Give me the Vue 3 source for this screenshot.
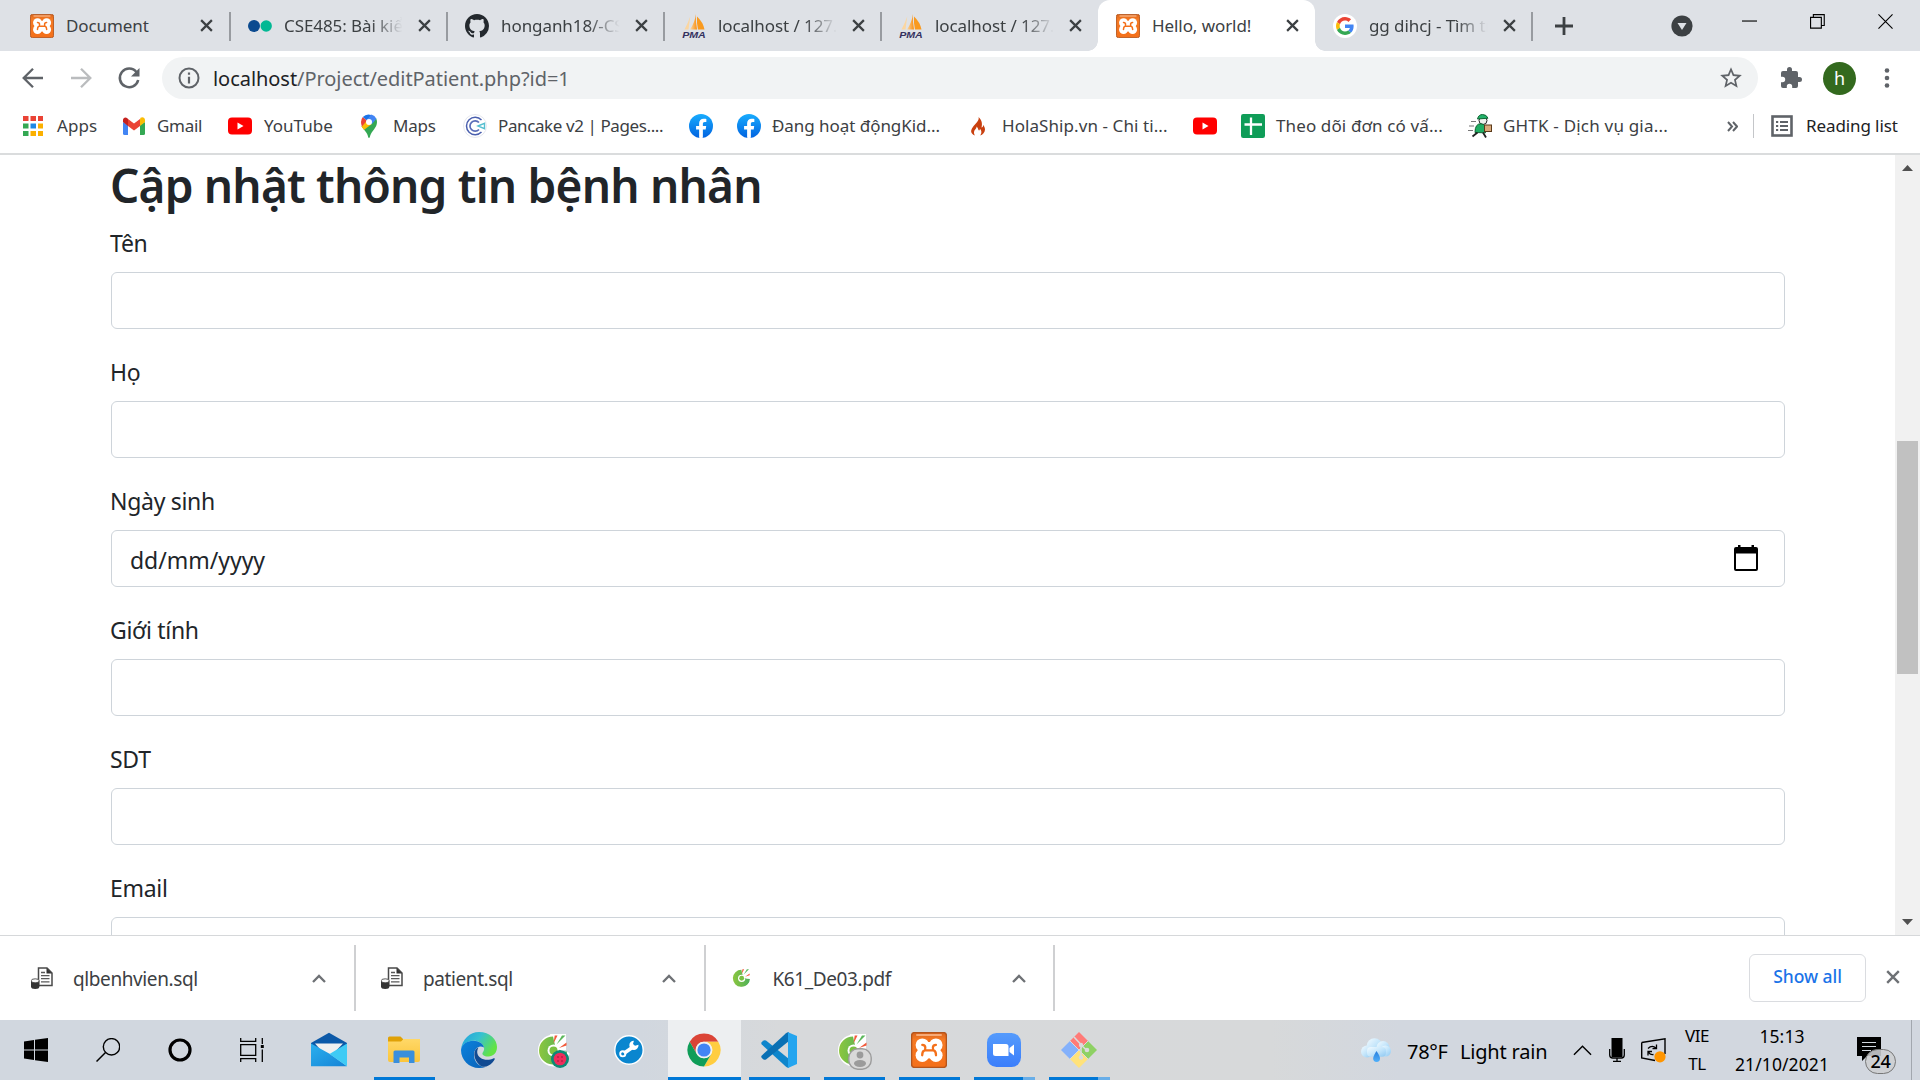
<script setup>
const tabs = [
  { icon: 'xampp', title: 'Document' },
  { icon: 'dots', title: 'CSE485: Bài kiểm tra', fade: true },
  { icon: 'github', title: 'honganh18/-CSE485', fade: true },
  { icon: 'pma', title: 'localhost / 127.0.0.1', fade: true },
  { icon: 'pma', title: 'localhost / 127.0.0.1', fade: true },
  { icon: 'xampp', title: 'Hello, world!', active: true },
  { icon: 'google', title: 'gg dihcj - Tìm trên Google', fade: true },
]

const bookmarks = [
  { icon: 'apps', title: 'Apps', w: 101, gap: 12, ls: 0.1 },
  { icon: 'gmail', title: 'Gmail', w: 106, gap: 11, ls: -0.3 },
  { icon: 'youtube', title: 'YouTube', w: 129, gap: 12, ls: 0 },
  { icon: 'maps', title: 'Maps', w: 106, gap: 12, ls: -0.2 },
  { icon: 'pancake', title: 'Pancake v2 | Pages....', w: 226, gap: 11, ls: -0.4 },
  { icon: 'facebook', title: '', w: 48, gap: 0 },
  { icon: 'facebook', title: 'Đang hoạt độngKid...', w: 229, gap: 11, ls: -0.05 },
  { icon: 'fire', title: 'HolaShip.vn - Chi ti...', w: 227, gap: 12, ls: 0.08 },
  { icon: 'youtube', title: '', w: 48, gap: 0 },
  { icon: 'sheets', title: 'Theo dõi đơn có vấ...', w: 227, gap: 11, ls: 0.12 },
  { icon: 'ghtk', title: 'GHTK - Dịch vụ gia...', w: 210, gap: 11, ls: 0.2 },
]

const fields = [
  { label: 'Tên' },
  { label: 'Họ' },
  { label: 'Ngày sinh', value: 'dd/mm/yyyy', date: true },
  { label: 'Giới tính' },
  { label: 'SDT' },
  { label: 'Email' },
]

const downloads = [
  { icon: 'sqlfile', name: 'qlbenhvien.sql' },
  { icon: 'sqlfile', name: 'patient.sql' },
  { icon: 'coccoc', name: 'K61_De03.pdf' },
]

const system = ['windows', 'search', 'cortana', 'taskview']
const apps = [
  { icon: 'mail' },
  { icon: 'explorer', open: true },
  { icon: 'edge' },
  { icon: 'coccoc', badge: 'melon' },
  { icon: 'wrench' },
  { icon: 'chrome', open: true, active: true },
  { icon: 'vscode', open: true },
  { icon: 'coccoc', badge: 'person', open: true },
  { icon: 'xampp', open: true },
  { icon: 'zoom', open: true, multi: true },
  { icon: 'git', open: true, multi: true },
]
</script>

<template>
  <div class="screen">
    <svg class="defs" width="0" height="0" aria-hidden="true">
      <defs>
        <linearGradient id="gOrange" x1="0" y1="0" x2="0" y2="1"><stop offset="0" stop-color="#d9641c" /><stop offset=".2" stop-color="#f57a24" /><stop offset="1" stop-color="#f4701a" /></linearGradient>
        <linearGradient id="gFb" x1="0" y1="0" x2="0" y2="1"><stop offset="0" stop-color="#18acfe" /><stop offset="1" stop-color="#0163e0" /></linearGradient>
        <linearGradient id="gSail" x1="0" y1="0" x2="1" y2="0"><stop offset="0" stop-color="#fbd9a6" /><stop offset="1" stop-color="#f98d0e" /></linearGradient>
        <linearGradient id="gCoc" x1="0" y1="0" x2="1" y2="0"><stop offset="0" stop-color="#8cc63f" /><stop offset="1" stop-color="#4db05a" /></linearGradient>
        <linearGradient id="gFolder" x1="0" y1="0" x2="0" y2="1"><stop offset="0" stop-color="#ffd868" /><stop offset="1" stop-color="#fbc53a" /></linearGradient>
        <linearGradient id="gEdgeTop" x1="0" y1="0" x2="1" y2=".5"><stop offset="0" stop-color="#1f9fdf" /><stop offset=".5" stop-color="#36c1d0" /><stop offset="1" stop-color="#62e345" /></linearGradient>
        <linearGradient id="gEdge" x1="0" y1="0" x2="1" y2="1"><stop offset="0" stop-color="#0b82dd" /><stop offset="1" stop-color="#0a62b8" /></linearGradient>
        <linearGradient id="gMail" x1="0" y1="0" x2="1" y2="1"><stop offset="0" stop-color="#2bb0ee" /><stop offset="1" stop-color="#1583d6" /></linearGradient>
        <linearGradient id="gZoom" x1="0" y1="0" x2="0" y2="1"><stop offset="0" stop-color="#559bfc" /><stop offset="1" stop-color="#3a7efb" /></linearGradient>
        <linearGradient id="gCloud" x1="0" y1="0" x2="1" y2="1"><stop offset="0" stop-color="#f3fbff" /><stop offset=".5" stop-color="#c5e6fb" /><stop offset="1" stop-color="#8ec8f2" /></linearGradient>
        <linearGradient id="gDrop" x1="0" y1="0" x2="0" y2="1"><stop offset="0" stop-color="#2a7fdc" /><stop offset="1" stop-color="#4fb0fb" /></linearGradient>
      </defs>
      <symbol id="xampp" viewBox="0 0 36 36">
        <rect x=".6" y=".6" width="34.8" height="34.8" rx="3" fill="url(#gOrange)" stroke="#b4551c" stroke-width="1.4" />
        <rect x="5" y="2" width="26" height="2" rx="1" fill="#ffc69c" opacity=".7" />
        <g fill="#fff"><circle cx="11.300" cy="13.100" r="6.700" /><circle cx="24.900" cy="13.100" r="6.700" /><circle cx="11.300" cy="23.300" r="6.700" /><circle cx="24.900" cy="23.300" r="6.700" /><rect x="7.500" y="10" width="21" height="16.500" /></g>
        <path d="M18.100 6v3.600M18.100 26.800v3.600" stroke="#f4701a" stroke-width="1.600" />
        <path d="M4 18.200h2M30.200 18.200h2" stroke="#f4701a" stroke-width="2" />
        <g fill="none" stroke="#f4701a" stroke-width="2.300" stroke-linecap="round" stroke-linejoin="round"><path d="M11.300 12.800q3 .2 3 2.700t-.8 2.900q-2.300.8-2.300 4.900M24.900 12.800q-3 .2-3 2.700t.8 2.900q2.300.8 2.300 4.900M13.500 18.400h9" /></g>
      </symbol>
      <symbol id="dots" viewBox="0 0 24 24"><circle cx="6" cy="12" r="6" fill="#0b4a8f" /><circle cx="18.200" cy="12" r="5.700" fill="#02b894" /></symbol>
      <symbol id="github" viewBox="0 0 16 16"><path fill="#24292e" d="M8 0C3.580 0 0 3.580 0 8c0 3.540 2.290 6.530 5.470 7.590.4.070.55-.17.55-.38 0-.19-.01-.82-.01-1.490-2.010.37-2.530-.49-2.690-.94-.09-.23-.48-.94-.82-1.130-.28-.15-.68-.52-.01-.53.63-.01 1.080.58 1.230.82.72 1.210 1.870.87 2.330.66.07-.52.28-.87.51-1.070-1.780-.2-3.640-.89-3.640-3.950 0-.87.31-1.590.82-2.150-.08-.2-.36-1.020.08-2.120 0 0 .67-.21 2.200.82.64-.18 1.320-.27 2-.27s1.360.09 2 .27c1.530-1.040 2.200-.82 2.200-.82.44 1.100.16 1.920.08 2.120.51.56.82 1.270.82 2.150 0 3.070-1.870 3.750-3.650 3.950.29.25.54.73.54 1.480 0 1.070-.01 1.930-.01 2.200 0 .21.15.46.55.38A8.010 8.010 0 0 0 16 8c0-4.420-3.580-8-8-8z" /></symbol>
      <symbol id="pma" viewBox="0 0 24 24">
        <path d="M8.200 2.500 6.500 15.500H2.500Q6 9 8.200 2.500z" fill="#fbd6a0" /><path d="M14 0Q13.500 9 15 15.500H8Q13 8 14 0z" fill="url(#gSail)" /><path d="M15 2.500Q21 8 22.500 15.500H16Q14.500 9 15 2.500z" fill="#f99a1f" />
        <text x=".3" y="23.500" font-family="Liberation Sans, sans-serif" font-size="9" font-weight="bold" font-style="italic" fill="#35315f" textLength="23.400" lengthAdjust="spacingAndGlyphs">PMA</text>
      </symbol>
      <symbol id="google" viewBox="0 0 24 24"><circle cx="12" cy="12" r="12" fill="#fff" /><g transform="translate(3 3) scale(.375)"><path fill="#ea4335" d="M24 9.500c3.540 0 6.710 1.220 9.210 3.600l6.850-6.850C35.900 2.380 30.470 0 24 0 14.620 0 6.510 5.380 2.560 13.220l7.980 6.190C12.430 13.720 17.740 9.500 24 9.500z" /><path fill="#4285f4" d="M46.980 24.550c0-1.570-.15-3.090-.38-4.550H24v9.020h12.940c-.58 2.960-2.260 5.480-4.780 7.180l7.730 6c4.510-4.180 7.090-10.360 7.090-17.650z" /><path fill="#fbbc05" d="M10.530 28.590c-.48-1.450-.76-2.990-.76-4.590s.27-3.140.76-4.590l-7.980-6.190C.92 16.460 0 20.120 0 24c0 3.880.92 7.540 2.560 10.780l7.970-6.190z" /><path fill="#34a853" d="M24 48c6.480 0 11.930-2.130 15.890-5.810l-7.730-6c-2.150 1.450-4.920 2.300-8.160 2.300-6.260 0-11.570-4.220-13.470-9.910l-7.980 6.190C6.510 42.620 14.620 48 24 48z" /></g></symbol>
      <symbol id="apps" viewBox="0 0 24 24"><g><path fill="#ea4335" d="M2 2h5.500v5H2zM9.500 2H15v5H9.500zM17 2h5v5h-5z" /><path fill="#34a853" d="M2 9.500h5.500v5H2zM2 17h5.500v5H2z" /><path fill="#1e88e5" d="M9.500 9.500H15v5H9.500z" /><path fill="#fbb000" d="M17 9.500h5v5h-5zM9.500 17H15v5H9.500zM17 17h5v5h-5z" /></g></symbol>
      <symbol id="gmail" viewBox="0 0 24 24"><path fill="#4285f4" d="M1 8v11.500A1.500 1.500 0 0 0 2.500 21H6V11z" /><path fill="#34a853" d="M18 11v10h3.500a1.500 1.500 0 0 0 1.500-1.500V8z" /><path fill="#fbbc04" d="M18 5.500V12l5-4V6c0-2.500-2.700-3.600-4.500-2.200z" /><path fill="#ea4335" d="M6 12V5l6 4.600L18 5v7l-6 4.600z" /><path fill="#c5221f" d="M1 6v2l5 4V5l-.7-.8C3.500 2.600 1 3.800 1 6z" /></symbol>
      <symbol id="youtube" viewBox="0 0 24 24"><rect x="0" y="3.500" width="24" height="17" rx="4" fill="red" /><path d="M9.500 8.500v7l6-3.500z" fill="#fff" /></symbol>
      <symbol id="maps" viewBox="0 0 24 24"><path fill="#34a853" d="M4.500 12c1 3 5 5 6.300 9.800.4 1.600.6 2.200 1.200 2.200s.8-.6 1.200-2.200C14.800 16.500 20 14 20 8q0-1.800-.8-3.500z" /><path fill="#fbbc04" d="M7 15.500 17.500 3 12 8.500 4.500 12q.8 1.700 2.500 3.500z" /><path fill="#fbbc04" d="m9.500 5.500-4.800 6.800q.8 1.700 2.500 3.400L14.800 10z" /><path fill="#ea4335" d="M5.800 3A8 8 0 0 0 4 8q0 2.500 1 4.500L10 6.500z" /><path fill="#1a73e8" d="M5.800 3 10 6.500 14.400 1A8 8 0 0 0 5.800 3z" /><path fill="#4285f4" d="M14.400.4 9.500 6.200l5.200 4 4.700-5.500A8 8 0 0 0 14.400.4z" /><circle cx="12" cy="8" r="3" fill="#fff" /></symbol>
      <symbol id="pancake" viewBox="0 0 24 24"><circle cx="12" cy="12" r="11.500" fill="#fff" stroke="#e6e8ef" /><g fill="none"><path d="M18.500 6A8.700 8.700 0 1 0 18.500 18" stroke="#4a5fae" stroke-width="1.500" /><path d="M16 8.500a5.200 5.200 0 1 0 0 7" stroke="#5a6db8" stroke-width="1.700" /><path d="m15 12 6.500-2.600v5.200z" stroke="#56bfd0" stroke-width="1.400" /></g></symbol>
      <symbol id="facebook" viewBox="0 0 24 24"><circle cx="12" cy="12" r="12" fill="url(#gFb)" /><path fill="#fff" d="m16.670 15.470.53-3.470h-3.330V9.750c0-.95.460-1.870 1.960-1.870h1.510V4.920s-1.370-.23-2.690-.23c-2.740 0-4.530 1.660-4.530 4.670V12H7.080v3.470h3.040v8.390a12 12 0 0 0 3.750 0v-8.390z" /></symbol>
      <symbol id="fire" viewBox="0 0 24 24"><path fill="#c9400f" d="M12.500 3c1 3-1.500 5-4 8S4 17 6 19.500q1 1.500 3 2c-1.500-2-1.300-4.500.2-6 1-1 1.500-1.800 1.300-3 2 1.500 1.600 3.500 2.500 4 .9-.2 1-1.300.8-2 2.200 2 2 5 .4 7 2.500-.8 4.800-3 4.800-6 0-2-1-3.500-1.800-4.500 0 1.300-.5 2.300-1.700 2.500C16.500 10 16 6 12.500 3z" /></symbol>
      <symbol id="sheets" viewBox="0 0 24 24"><rect width="24" height="24" rx="2.200" fill="#0f9d58" /><path d="M10 3.500v17.500M3.500 10.500h17.500" stroke="#fff" stroke-width="2.300" /></symbol>
      <symbol id="ghtk" viewBox="0 0 24 24"><path d="M3 7.500h5M1 12h5M0 16.500h5" stroke="#777" stroke-width="1.100" /><circle cx="15" cy="6.500" r="4" fill="#eef3ee" stroke="#222" /><path d="M9.500 5Q10.500.5 14.500.5t5.500 3.700z" fill="#23b26b" stroke="#163" /><path d="M7 18.500Q7 9.500 13 9.800q3.500.2 4.500 3v6z" fill="#1fae63" stroke="#163" /><rect x="16.500" y="11" width="7" height="6.500" fill="#d9a97a" stroke="#5b3a1a" /><path d="m9.500 18.500-5 4M15 18.500l3 5" stroke="#222" stroke-width="1.800" /></symbol>
      <symbol id="reading" viewBox="0 0 22 22"><rect x="1.500" y="1.500" width="19" height="19" fill="none" stroke="#5f6368" stroke-width="2.600" /><path d="M5 7h2.200M9 7h8M5 11h2.200M9 11h8M5 15h2.200M9 15h8" stroke="#5f6368" stroke-width="2.100" /></symbol>
      <symbol id="close" viewBox="0 0 14 14"><path d="m1.200 1.200 11.600 11.600m0-11.600L1.200 12.800" stroke="currentColor" stroke-width="2.400" /></symbol>
      <symbol id="chevron" viewBox="0 0 14 9"><path d="M1 8l6-6 6 6" fill="none" stroke="currentColor" stroke-width="2.300" /></symbol>
      <symbol id="sqlfile" viewBox="0 0 22 22"><path d="M7.500 1h8.500l5 5v12.500H7.500z" fill="#fff" stroke="#4a4a4a" stroke-width="1.500" /><path d="M15.500 1v5.500h5.500z" fill="#333" /><path d="M10 5.500h4M10 8.600h8.500M10 11.700h8.500M10 14.800h8.500" stroke="#5a5a5a" stroke-width="1.300" /><path d="M0 14v5.500q0 2.500 4.200 2.500t4.200-2.500V14z" fill="#333" /><ellipse cx="4.200" cy="13.800" rx="4" ry="2" fill="#f7f7f7" stroke="#333" stroke-width=".8" /></symbol>
      <symbol id="coccoc" viewBox="0 0 36 36"><path d="M17 4A14.500 14.500 0 1 0 32 22l-8-3-5-3z" fill="url(#gCoc)" stroke="#fff" stroke-width="3" stroke-linejoin="round" /><path d="M14 2h16v16H18z" fill="#fff" /><path d="M17 4.500A14 14 0 1 0 31 19.500l-5.500-.3-6-4z" fill="url(#gCoc)" /><circle cx="17.500" cy="18.500" r="6" fill="#fff" /><circle cx="17.500" cy="18.500" r="4" fill="#7cc142" /><path d="m17.500 11.500 1.200-8h2.800z" fill="#f2593a" /><path d="m20.500 12.500 5.500-9h3.500z" fill="#5cb85c" /><path d="m23 16 7.500-5.500v3z" fill="#f2593a" /></symbol>
      <symbol id="windows" viewBox="0 0 24 24"><path d="M0 3.400 10 2v9.500H0zM11 1.800 24 0v11.500H11zM0 12.500h10V22L0 20.600zM11 12.500h13V24l-13-1.800z" /></symbol>
      <symbol id="search" viewBox="0 0 24 24"><circle cx="15.500" cy="8.800" r="8.200" fill="none" stroke="#000" stroke-width="1.400" /><path d="M9.500 14.500.5 23.500" stroke="#000" stroke-width="1.500" /></symbol>
      <symbol id="cortana" viewBox="0 0 24 24"><circle cx="12" cy="12" r="10" fill="none" stroke="#000" stroke-width="3.200" /></symbol>
      <symbol id="taskview" viewBox="0 0 24 24"><path d="M.7 0v3.300h15V0M.7 24v-3.300h15V24M.7 6.700h15v10.600H.7zM22.300 0v6M22.300 11.500V24" fill="none" stroke="#000" stroke-width="1.300" /><path d="M20.800 7h3v3h-3z" /></symbol>
      <symbol id="mail" viewBox="0 0 36 36"><path d="M0 11 18 .8 36 11v8H0z" fill="#0c59a8" /><path d="M4 11.500h28L20 24H15z" fill="#f0f0f0" /><path d="M0 11.500 19 22 36 34.200H0z" fill="url(#gMail)" /><path d="M36 11.500 18.500 22 36 34.200z" fill="#3fcbf5" /></symbol>
      <symbol id="explorer" viewBox="0 0 36 36"><path d="M2 6q0-1.500 1.500-1.500h11L17 7v4H2z" fill="#e0a106" /><path d="M2 9.500h13L17.500 7H34v21q0 2-2 2H4q-2 0-2-2z" fill="url(#gFolder)" /><path d="M7.500 31V20q0-1.500 1.500-1.500h18q1.500 0 1.500 1.500v11h-5.500v-5.500h-9.500V31z" fill="#3a8fdc" /></symbol>
      <symbol id="edge" viewBox="0 0 36 36"><path d="M0 18C1 7 9 0 18 0c11 0 18 7.500 18 15 0 6-4 9.500-8.500 9.500-5 0-6.500-2-6-3.500 1-2 2-3 1.500-5.500C22 11 17 8.500 12 8.700 5 9 .5 13.500 0 18z" fill="url(#gEdgeTop)" /><path d="M0 18C.5 12.500 6 8.700 12 8.700c6 0 10.500 3 11 6.800-5-3-10 1-10 7.500 0 6 4.500 12 11.500 12Q22 36 18 36C8 36 0 28 0 18z" fill="url(#gEdge)" /><path d="M17.500 15.500c-6 2-5.500 12 1.500 18 3 2 6 1.500 8.500.1 3-1.700 5.500-4.600 6.200-6.400.3-.8-.4-1.200-1-.9-7 3.500-16 .7-16.500-6 0-2 .5-3.500 1.300-4.800z" fill="#114a92" /></symbol>
      <symbol id="wrench" viewBox="0 0 36 36"><circle cx="18" cy="18" r="14.200" fill="#0a86cf" stroke="#fff" stroke-width="1.400" /><path d="M13 21.200 22 15" stroke="#fff" stroke-width="3.600" /><circle cx="11.800" cy="21.800" r="2.600" fill="none" stroke="#fff" stroke-width="1.900" /><path d="M27.500 12.800a4.600 4.600 0 1 1-4.600-4.100l-.9 3.300 2 1.700z" fill="#fff" /></symbol>
      <symbol id="chrome" viewBox="0 0 48 48"><path d="M4.950 12.980A22 22 0 0 1 43.100 13H24a11 11 0 0 0-9.530 16.500z" fill="#db4437" /><path d="M43.100 13A22 22 0 0 1 24 46l9.530-16.500A11 11 0 0 0 24 13z" fill="#ffcd40" /><path d="M4.950 12.980A22 22 0 0 0 24 46l9.530-16.500a11 11 0 0 1-19.060 0z" fill="#0f9d58" /><circle cx="24" cy="24" r="11" fill="#f1f1f1" /><circle cx="24" cy="24" r="8.800" fill="#4285f4" /></symbol>
      <symbol id="vscode" viewBox="0 0 36 36"><path d="M2.500 8.600q1.300-.9 2.500 0L28 27v8.500q-1.500.5-3-.8L.8 12.500q-1.100-1.200 0-2.400z" fill="#0f86cc" /><path d="M2.500 27.400q1.300.9 2.500 0L28 9V.5q-1.500-.5-3 .8L.8 23.500q-1.100 1.200 0 2.400z" fill="#0a70b4" /><path d="M27 .2 36 4v28l-9 4z" fill="#24a5ef" /></symbol>
      <symbol id="zoom" viewBox="0 0 36 36"><rect x="1" y="1" width="34" height="34" rx="9.500" fill="url(#gZoom)" /><path d="M7 12h13q2.500 0 2.500 2.500V24h-13Q7 24 7 21.500zM23.500 16l4.500-3.600v11.200L23.500 20z" fill="#fff" /></symbol>
      <symbol id="git" viewBox="0 0 36 36"><path d="M9 9 18 0l9 9-9 9z" fill="#ff7b78" /><path d="m18 18 9-9 9 9-9 9z" fill="#8ed164" /><path d="m0 18 9-9 9 9-9 9z" fill="#84b1fb" /><path d="m9 27 9-9 9 9-9 9z" fill="#ffe27a" /><path d="M13 5 20 12.500v13M20 13l5.500 5" stroke="#dadbdc" stroke-width="1.600" fill="none" /><path d="m9 9 9 9 9-9M9 27l9-9 9 9" stroke="#dadbdc" stroke-width="1" fill="none" /><circle cx="26" cy="18" r="2.300" fill="#dadbdc" /><circle cx="20" cy="25.500" r="2.300" fill="#dadbdc" /><circle cx="20" cy="13" r="2.200" fill="#dadbdc" /></symbol>
      <symbol id="melon" viewBox="0 0 18 18"><circle cx="9" cy="9" r="9" fill="#0d8a75" /><circle cx="9" cy="9" r="6.300" fill="#ee2d5b" /><g fill="#9c1238"><circle cx="7" cy="7" r=".8" /><circle cx="11" cy="7" r=".8" /><circle cx="7" cy="11" r=".8" /><circle cx="11" cy="11" r=".8" /></g></symbol>
      <symbol id="person" viewBox="0 0 24 22"><rect x=".8" y=".8" width="22.400" height="20.400" rx="9" fill="#d9d9d9" stroke="#9c9c9c" stroke-width="1.400" /><circle cx="12" cy="7" r="3.400" fill="#9b9b9b" /><ellipse cx="12" cy="15.500" rx="6" ry="3.400" fill="#9b9b9b" /></symbol>
    </svg>

    <header class="tabstrip">
      <div v-for="(t, i) in tabs" :key="i" class="tab" :class="{ active: t.active, plain: i === 4 }">
        <svg class="fav"><use :href="'#' + t.icon" /></svg>
        <span class="tab-title" :class="{ fade: t.fade }">{{ t.title }}</span>
        <svg class="tab-x"><use href="#close" /></svg>
      </div>
      <svg class="plus" viewBox="0 0 18 18"><path d="M9 0v18M0 9h18" stroke="#3c4043" stroke-width="2.800" /></svg>
      <div class="window-controls">
        <svg width="22" height="22" viewBox="0 0 22 22"><circle cx="11" cy="11" r="10.600" fill="#3c4043" /><path d="M6.500 8h9L11 15z" fill="#dee1e6" /></svg>
        <svg class="ctl" viewBox="0 0 16 16"><path d="M0 7.500h16" stroke="#000" stroke-width="1.200" /></svg>
        <svg class="ctl" viewBox="0 0 16 16"><path d="M.6 3.600h11.500v11.500H.6zM3.600 3.500V.6h11.600v11.600h-3" fill="none" stroke="#000" stroke-width="1.200" /></svg>
        <svg class="ctl" viewBox="0 0 16 16"><path d="m.5.5 15 15m0-15-15 15" stroke="#000" stroke-width="1.200" /></svg>
      </div>
    </header>

    <div class="toolbar">
      <svg class="nav" viewBox="0 0 24 24"><path d="M22 12H3.500M12 2.700 2.700 12l9.300 9.300" fill="none" stroke="#5f6368" stroke-width="2.300" /></svg>
      <svg class="nav" viewBox="0 0 24 24"><path d="M2 12h18.500M12 2.700l9.300 9.300-9.300 9.300" fill="none" stroke="#babcbe" stroke-width="2.300" /></svg>
      <svg class="nav" viewBox="0 0 24 24"><path d="M19.500 6.200A9.300 9.300 0 1 0 21.200 14" fill="none" stroke="#5f6368" stroke-width="2.500" /><path d="M22.500 2v8.500H14z" fill="#5f6368" /></svg>
      <div class="omnibox">
        <svg class="info" viewBox="0 0 22 22"><circle cx="11" cy="11" r="9.500" fill="none" stroke="#5f6368" stroke-width="2" /><path d="M11 5.500v2.300M11 9.700v6.800" stroke="#5f6368" stroke-width="2.200" /></svg>
        <span class="url"><b>localhost</b>/Project/editPatient.php?id=1</span>
        <svg class="star" viewBox="0 0 24 24"><path fill="#5f6368" d="M22 9.240l-7.190-.62L12 2 9.190 8.630 2 9.240l5.460 4.730L5.820 21 12 17.270 18.180 21l-1.630-7.030L22 9.240zM12 15.400l-3.760 2.270 1-4.280-3.320-2.880 4.380-.38L12 6.100l1.710 4.040 4.380.38-3.320 2.880 1 4.280L12 15.400z" /></svg>
      </div>
      <svg class="puzzle" viewBox="0 0 24 24"><path fill="#5f6368" d="M20.500 11H19V7a2 2 0 0 0-2-2h-4V3.500a2.500 2.500 0 0 0-5 0V5H4a2 2 0 0 0-2 2v3.800h1.500a2.700 2.700 0 0 1 0 5.400H2V20a2 2 0 0 0 2 2h3.800v-1.500a2.700 2.700 0 0 1 5.400 0V22H17a2 2 0 0 0 2-2v-4h1.500a2.500 2.500 0 0 0 0-5z" /></svg>
      <span class="avatar">h</span>
      <svg class="kebab" viewBox="0 0 6 20"><g fill="#5f6368"><circle cx="3" cy="2.500" r="2.300" /><circle cx="3" cy="10" r="2.300" /><circle cx="3" cy="17.500" r="2.300" /></g></svg>
    </div>

    <nav class="bookmarks">
      <a v-for="(b, i) in bookmarks" :key="i" class="bm" :style="{ width: b.w + 'px', gap: b.gap + 'px', letterSpacing: (b.ls || 0) + 'px' }">
        <svg class="fav"><use :href="'#' + b.icon" /></svg><span v-if="b.title">{{ b.title }}</span>
      </a>
      <svg class="more" viewBox="0 0 11 11"><path d="M1 1l4 4.500L1 10M6 1l4 4.500L6 10" fill="none" stroke="#5f6368" stroke-width="2" /></svg>
      <div class="reading"><svg><use href="#reading" /></svg><span>Reading list</span></div>
    </nav>

    <main class="page">
      <div class="content">
        <h1>Cập nhật thông tin bệnh nhân</h1>
        <div v-for="f in fields" :key="f.label" class="field">
          <label>{{ f.label }}</label>
          <div class="control">
            <span>{{ f.value }}</span>
            <svg v-if="f.date" viewBox="0 0 24 26"><path d="M2 3h20q1 0 1 1v20q0 1-1 1H2q-1 0-1-1V4q0-1 1-1z" fill="none" stroke="#000" stroke-width="2" /><path d="M1 3h22v5.500H1zM4 0h2.500v4H4zM17.500 0H20v4h-2.500z" /></svg>
          </div>
        </div>
      </div>
      <div class="scrollbar">
        <svg class="arrow" viewBox="0 0 11 6"><path d="M0 6 5.500 0 11 6z" fill="#505050" /></svg>
        <div class="thumb"></div>
        <svg class="arrow" viewBox="0 0 11 6"><path d="M0 0h11L5.500 6z" fill="#505050" /></svg>
      </div>
    </main>

    <section class="shelf">
      <div v-for="d in downloads" :key="d.name" class="dl">
        <svg class="dl-icon"><use :href="'#' + d.icon" /></svg>
        <span>{{ d.name }}</span>
        <svg class="dl-chev"><use href="#chevron" /></svg>
      </div>
      <button class="show-all">Show all</button>
      <svg class="shelf-x"><use href="#close" /></svg>
    </section>

    <footer class="taskbar">
      <div v-for="s in system" :key="s" class="sys"><svg><use :href="'#' + s" /></svg></div>
      <div class="apps">
        <div v-for="(a, i) in apps" :key="i" class="app" :class="{ active: a.active, open: a.open, multi: a.multi }">
          <svg class="app-icon" :class="a.icon"><use :href="'#' + a.icon" /></svg>
          <svg v-if="a.badge" class="badge" :class="a.badge"><use :href="'#' + a.badge" /></svg>
        </div>
      </div>
      <div class="tray">
        <svg class="weather" viewBox="0 0 30 24"><g fill="url(#gCloud)"><circle cx="6" cy="13.500" r="6" /><circle cx="13.500" cy="8" r="7.800" /><circle cx="22" cy="9.500" r="6.500" /><circle cx="24.500" cy="13" r="5.500" /><rect x="6" y="9" width="19" height="9.800" rx="4" /></g><path d="M15.500 13q3.500 5 3.500 7.500a3.400 3.400 0 0 1-6.800 0Q12.200 18 15.500 13z" fill="url(#gDrop)" /></svg>
        <span class="temp">78°F</span><span class="cond">Light rain</span>
        <svg class="up" viewBox="0 0 20 12"><path d="M1 11 10 2l9 9" fill="none" stroke="#000" stroke-width="1.500" /></svg>
        <svg class="mic" viewBox="0 0 16 24"><path d="M2.500 0h11v19h-11z" /><path d="M.7 11v6q0 3 3 3h8.600q3 0 3-3v-6M8 20v3M4 23.300h8" fill="none" stroke="#000" stroke-width="1.300" /></svg>
        <svg class="update" viewBox="0 0 26 25"><path d="M.7 4.500 24 .8V16M14 22.500.7 20V4.500" fill="none" stroke="#000" stroke-width="1.400" /><path d="M7 10.500q4-4 8-.5M15.500 6.500V10.500H11.500M7 17.500v-4h4M7.500 14q1.500 3 5 2.500" fill="none" stroke="#000" stroke-width="1.300" /><circle cx="19" cy="18.800" r="5.600" fill="#ff9500" /></svg>
        <div class="two lang"><span>VIE</span><span>TL</span></div>
        <div class="two clock"><span>15:13</span><span>21/10/2021</span></div>
        <div class="notif">
          <svg viewBox="0 0 24 24"><path d="M0 0h24v19H10l-5 5v-5H0z" /><path d="M5 5.500h14M5 9.500h14M5 13.500h9" stroke="#d2d7df" stroke-width="1.200" /></svg>
          <span class="count">24</span>
        </div>
        <div class="peek"></div>
      </div>
    </footer>
  </div>
</template>

<style>
body { margin: 0; overflow: hidden; }
</style>

<style scoped>
.screen {
  width: 1920px; height: 1080px; display: flex; flex-direction: column; background: #fff; overflow: hidden;
  font-family: 'Noto Sans', 'Open Sans', sans-serif; font-size: 17px; color: #3c4043; letter-spacing: -0.3px;
}
svg { display: block; flex: none; }
.defs { position: absolute; }
.fav { width: 24px; height: 24px; }

.tabstrip { height: 51px; flex: none; background: #dee1e6; display: flex; align-items: center; padding-left: 13px; }
.tab { position: relative; width: 217px; height: 51px; flex: none; display: flex; align-items: center; box-sizing: border-box; padding-left: 18px; letter-spacing: -0.08px; }
.tab:first-child, .tab:last-of-type { padding-left: 17px; }
.tab::after { content: ''; position: absolute; right: -1px; top: 12px; width: 2px; height: 29px; background: #989ba0; }
.tab.plain::after { display: none; }
.tab-title { margin-left: 12px; width: 121px; white-space: nowrap; overflow: hidden; line-height: 30px; }
.fade { -webkit-mask-image: linear-gradient(90deg, #000 72%, transparent 98%); mask-image: linear-gradient(90deg, #000 72%, transparent 98%); }
.tab-x { width: 13px; height: 13px; margin-left: 13px; color: #3c4043; }
.tab.active { background: #fff; border-radius: 12px 12px 0 0; }
.tab.active::before, .tab.active::after { content: ''; position: absolute; top: auto; bottom: 0; width: 10px; height: 10px; }
.tab.active::before { left: -10px; background: radial-gradient(circle at 0 0, transparent 9.500px, #fff 10px); }
.tab.active::after { right: -10px; background: radial-gradient(circle at 100% 0, transparent 9.500px, #fff 10px); }
.plus { width: 18px; height: 18px; margin-left: 23px; }
.window-controls { margin-left: auto; display: flex; align-items: center; padding-right: 27px; }
.ctl { width: 15px; height: 15px; margin: 0 0 8px 53px; }
.ctl:nth-child(2) { margin-left: 49px; }

.toolbar { height: 54px; flex: none; display: flex; align-items: center; padding-left: 21px; }
.nav { width: 24px; height: 24px; margin-right: 24px; }
.omnibox { box-sizing: border-box; width: 1596px; height: 42px; margin-left: -3px; border-radius: 21px; background: #f1f3f4; display: flex; align-items: center; padding-left: 16px; }
.info { width: 22px; height: 22px; }
.url { margin-left: 13px; flex: 1; font-size: 20px; letter-spacing: -0.05px; color: #5f6368; }
.url b { font-weight: 400; color: #202124; }
.star { width: 26px; height: 26px; margin-right: 14px; }
.puzzle { width: 24px; height: 24px; margin-left: 21px; }
.avatar { width: 33px; height: 33px; margin-left: 20px; border-radius: 50%; background: #33691e; color: #fff; text-align: center; line-height: 33px; font-size: 18px; }
.kebab { width: 6px; height: 20px; margin-left: 28px; }

.bookmarks { box-sizing: border-box; height: 50px; flex: none; display: flex; align-items: center; padding: 2px 0 8px 21px; border-bottom: 2px solid #dadcdd; }
.bm { display: flex; align-items: center; flex: none; white-space: nowrap; }
.bm span, .reading span { padding-bottom: 2px; }
.more { width: 11px; height: 11px; margin-left: 49px; }
.reading { display: flex; align-items: center; height: 24px; margin-left: 15px; border-left: 1px solid #c4c6c9; padding-left: 17px; gap: 13px; color: #202124; letter-spacing: -0.1px; }
.reading svg { width: 22px; height: 22px; }

.page { height: 780px; flex: none; display: flex; overflow: hidden; justify-content: space-between; }
.content { width: 1674px; margin-left: 111px; color: #212529; }
h1 { margin: 0 0 10px -1px; font-size: 46px; line-height: 60px; font-weight: 600; letter-spacing: -0.8px; white-space: nowrap; }
.field { height: 129px; font-size: 23px; letter-spacing: -0.3px; }
label { display: block; line-height: 36px; margin: 0 0 11px -1px; }
.control { box-sizing: border-box; height: 57px; border: 1px solid #ced4da; border-radius: 6px; display: flex; align-items: center; justify-content: space-between; padding: 0 26px 0 18px; letter-spacing: -0.03px; }
.control span { padding-top: 2px; }
.control svg { width: 24px; height: 26px; margin-bottom: 2px; }
.scrollbar { width: 25px; background: #f1f1f1; display: flex; flex-direction: column; align-items: center; }
.arrow { width: 11px; height: 6px; margin-top: 10px; }
.thumb { width: 21px; height: 233px; background: #c1c1c1; margin: 270px 0 235px; }

.shelf { box-sizing: border-box; height: 85px; flex: none; border-top: 1px solid #d6d8da; display: flex; align-items: center; }
.dl { box-sizing: border-box; width: 349.500px; height: 66px; display: flex; align-items: center; border-right: 2px solid #cfd0d2; padding-left: 25px; font-size: 19px; letter-spacing: -0.4px; }
.dl:first-child { width: 356px; padding-left: 31px; }
.dl span { margin-left: 20px; width: 239px; padding-top: 2px; }
.dl-icon { width: 22px; height: 22px; }
.dl-chev { width: 14px; height: 9px; color: #6e7175; }
.show-all { box-sizing: border-box; width: 117px; height: 48px; margin: 0 0 1px auto; border: 1px solid #dadce0; border-radius: 6px; background: #fff; color: #1a73e8; font: 500 17.500px 'Noto Sans', 'Open Sans', sans-serif; letter-spacing: -0.05px; padding: 0 0 3px; }
.shelf-x { width: 14px; height: 14px; margin: 0 20px 2px; color: #6e7175; }

.taskbar { height: 60px; flex: none; display: flex; background: linear-gradient(90deg, #d1d7df 0, #d1d7df 640px, #d7d9db 780px, #d7d9da 1270px, #d2d7df 1400px, #d2d7df 100%); color: #000; }
.sys { width: 72px; display: flex; align-items: center; justify-content: center; }
.sys svg { width: 24px; height: 24px; }
.apps { display: flex; margin-left: 3px; }
.app { position: relative; width: 75px; display: flex; align-items: center; justify-content: center; }
.app-icon { width: 36px; height: 36px; }
.app.active::before { content: ''; position: absolute; inset: 0 0 0 2px; background: #edeff1; }
.app.active .app-icon { position: relative; }
.app.open::after { content: ''; position: absolute; left: 8px; bottom: 0; width: 61px; height: 3px; background: #0078d7; }
.app.active::after { left: 2px; width: 73px; }
.app.multi::after { background: linear-gradient(90deg, #0078d7 49px, #68aee8 49px); }
.badge { position: absolute; }
.badge.melon { width: 18px; height: 18px; left: 35px; top: 30px; }
.badge.person { width: 24px; height: 22px; left: 32px; top: 28px; }
.tray { margin-left: auto; width: 559px; display: flex; align-items: center; font-size: 20px; }
.weather { width: 30px; height: 24px; }
.temp { margin-left: 16px; width: 53px; padding-top: 3px; }
.cond { width: 113px; padding-top: 3px; white-space: nowrap; letter-spacing: -0.2px; }
.up { width: 19px; height: 12px; }
.mic { width: 16px; height: 24px; margin-left: 17px; }
.update { width: 26px; height: 25px; margin-left: 16px; }
.two { display: flex; flex-direction: column; align-items: center; font-size: 17px; line-height: 28px; letter-spacing: -0.5px; }
.lang { width: 30px; margin-left: 15px; }
.clock { width: 100px; margin-left: 20px; font-size: 17.500px; letter-spacing: 0.1px; }
.notif { position: relative; margin: 0 0 3px 25px; width: 38px; height: 24px; }
.notif svg { width: 24px; height: 24px; }
.count { position: absolute; left: 8px; top: 12px; box-sizing: border-box; width: 31px; height: 25px; border: 1px solid #777; border-radius: 13px; background: rgba(205, 207, 210, .88); font-size: 18px; font-weight: 500; line-height: 23px; text-align: center; }
.peek { width: 1px; height: 60px; margin-left: 16px; background: #a2a7ae; }
</style>
